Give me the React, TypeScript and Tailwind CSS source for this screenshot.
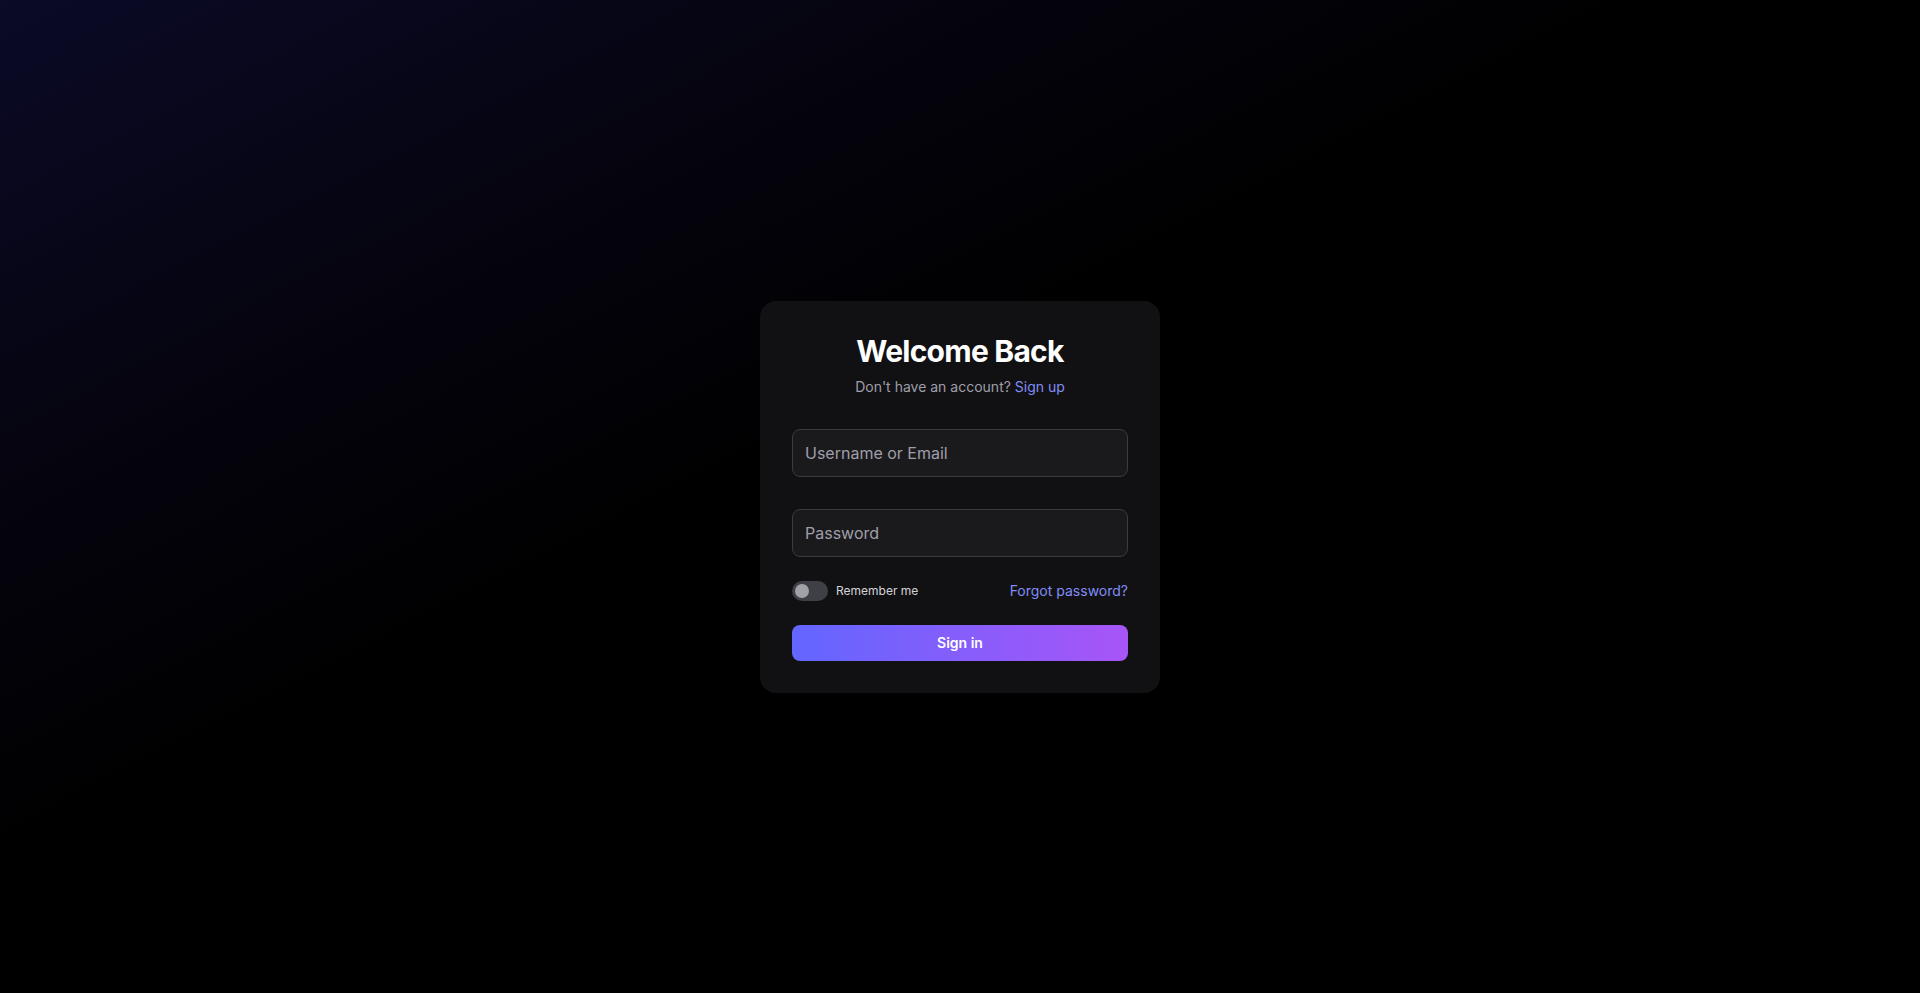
import React, { useState } from 'react';

const font = { fontFamily: 'Inter, "Noto Sans", sans-serif' };

export default function App() {
  const [remember, setRemember] = useState(false);
  const [username, setUsername] = useState('');
  const [password, setPassword] = useState('');

  return (
    <div
      style={font}
      className="min-h-screen w-full flex items-center justify-center bg-black bg-[linear-gradient(to_bottom_right,#0b0a27_0%,#05040f_24%,#000_44%)] text-white"
    >
      <form
        onSubmit={(e) => e.preventDefault()}
        className="w-[400px] rounded-2xl bg-[#111113] p-8 flex flex-col"
      >
        <h1 className="text-center text-3xl leading-9 font-bold tracking-tight">Welcome Back</h1>
        <p className="mt-2 text-center text-sm text-zinc-400">
          Don't have an account?{' '}
          <a href="#" className="text-[#818cf8]">
            Sign up
          </a>
        </p>

        <div className="mt-8 flex flex-col gap-8">
          <input
            value={username}
            onChange={(e) => setUsername(e.target.value)}
            placeholder="Username or Email"
            className="h-12 w-full rounded-lg border border-[#3a3a40] bg-[#1a1a1d] px-3 text-base text-white placeholder:text-zinc-400 outline-none"
          />
          <input
            type="password"
            value={password}
            onChange={(e) => setPassword(e.target.value)}
            placeholder="Password"
            className="h-12 w-full rounded-lg border border-[#3a3a40] bg-[#1a1a1d] px-3 text-base text-white placeholder:text-zinc-400 outline-none"
          />
        </div>

        <div className="mt-6 flex items-center justify-between">
          <label className="flex items-center gap-2 cursor-pointer">
            <button
              type="button"
              onClick={() => setRemember(!remember)}
              className={
                remember
                  ? 'relative h-5 w-9 rounded-full bg-[#6366f1]'
                  : 'relative h-5 w-9 rounded-full bg-[#3f3f46]'
              }
            >
              <span
                className={
                  remember
                    ? 'absolute top-[3px] left-[19px] h-[14px] w-[14px] rounded-full bg-white'
                    : 'absolute top-[3px] left-[3px] h-[14px] w-[14px] rounded-full bg-[#a1a1aa]'
                }
              />
            </button>
            <span className="text-xs text-zinc-300">Remember me</span>
          </label>
          <a href="#" className="text-sm text-[#818cf8]">
            Forgot password?
          </a>
        </div>

        <button
          type="submit"
          className="mt-6 h-9 w-full rounded-lg bg-[linear-gradient(to_right,#6366ff,#a855f7)] text-sm font-semibold text-white"
        >
          Sign in
        </button>
      </form>
    </div>
  );
}
